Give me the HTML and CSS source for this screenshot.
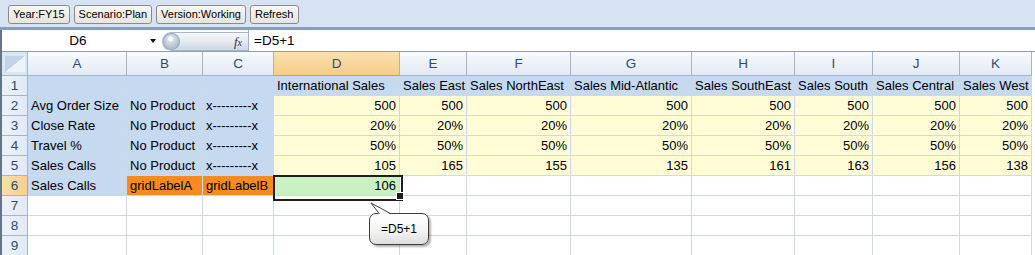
FILE: index.html
```html
<!DOCTYPE html>
<html>
<head>
<meta charset="utf-8">
<title>Sheet</title>
<link rel="stylesheet" href="styles.css">
</head>
<body>
<div class="toolbar">
  <button class="btn">Year:FY15</button>
  <button class="btn">Scenario:Plan</button>
  <button class="btn">Version:Working</button>
  <button class="btn">Refresh</button>
</div>
<div class="main">
  <div class="fbar">
    <div class="namebox"><span class="name">D6</span><span class="dd"></span></div>
    <div class="grip"><span class="knob"></span><span class="fx"><i>f</i><i class="fxx">x</i></span></div>
    <div class="formula">=D5+1</div>
  </div>
  <div class="sheetwrap">
    <div class="sheet">
      <div class="corner"><span class="tri"></span></div>
      <div class="h">A</div><div class="h">B</div><div class="h">C</div><div class="h hsel">D</div><div class="h">E</div><div class="h">F</div><div class="h">G</div><div class="h">H</div><div class="h">I</div><div class="h">J</div><div class="h">K</div>

      <div class="rh">1</div>
      <div class="c bl"></div><div class="c bl"></div><div class="c bl"></div>
      <div class="c bl">International Sales</div><div class="c bl">Sales East</div><div class="c bl">Sales NorthEast</div><div class="c bl">Sales Mid-Atlantic</div><div class="c bl">Sales SouthEast</div><div class="c bl">Sales South</div><div class="c bl">Sales Central</div><div class="c bl">Sales West</div>

      <div class="rh">2</div>
      <div class="c bl">Avg Order Size</div><div class="c bl">No Product</div><div class="c bl">x---------x</div>
      <div class="c yl r">500</div><div class="c yl r">500</div><div class="c yl r">500</div><div class="c yl r">500</div><div class="c yl r">500</div><div class="c yl r">500</div><div class="c yl r">500</div><div class="c yl r">500</div>

      <div class="rh">3</div>
      <div class="c bl">Close Rate</div><div class="c bl">No Product</div><div class="c bl">x---------x</div>
      <div class="c yl r">20%</div><div class="c yl r">20%</div><div class="c yl r">20%</div><div class="c yl r">20%</div><div class="c yl r">20%</div><div class="c yl r">20%</div><div class="c yl r">20%</div><div class="c yl r">20%</div>

      <div class="rh">4</div>
      <div class="c bl">Travel %</div><div class="c bl">No Product</div><div class="c bl">x---------x</div>
      <div class="c yl r">50%</div><div class="c yl r">50%</div><div class="c yl r">50%</div><div class="c yl r">50%</div><div class="c yl r">50%</div><div class="c yl r">50%</div><div class="c yl r">50%</div><div class="c yl r">50%</div>

      <div class="rh">5</div>
      <div class="c bl">Sales Calls</div><div class="c bl">No Product</div><div class="c bl">x---------x</div>
      <div class="c yl r">105</div><div class="c yl r">165</div><div class="c yl r">155</div><div class="c yl r">135</div><div class="c yl r">161</div><div class="c yl r">163</div><div class="c yl r">156</div><div class="c yl r">138</div>

      <div class="rh rhsel">6</div>
      <div class="c bl">Sales Calls</div><div class="c or">gridLabelA</div><div class="c or">gridLabelB</div>
      <div class="c gr r active">106</div><div class="c"></div><div class="c"></div><div class="c"></div><div class="c"></div><div class="c"></div><div class="c"></div><div class="c"></div>

      <div class="rh">7</div>
      <div class="c"></div><div class="c"></div><div class="c"></div><div class="c"></div><div class="c"></div><div class="c"></div><div class="c"></div><div class="c"></div><div class="c"></div><div class="c"></div><div class="c"></div>

      <div class="rh">8</div>
      <div class="c"></div><div class="c"></div><div class="c"></div><div class="c"></div><div class="c"></div><div class="c"></div><div class="c"></div><div class="c"></div><div class="c"></div><div class="c"></div><div class="c"></div>

      <div class="rh">9</div>
      <div class="c"></div><div class="c"></div><div class="c"></div><div class="c"></div><div class="c"></div><div class="c"></div><div class="c"></div><div class="c"></div><div class="c"></div><div class="c"></div><div class="c"></div>
    </div>
    <div class="tip">=D5+1</div>
    <svg class="tail" width="26" height="14" viewBox="0 0 26 14">
      <polygon points="3,1 11,12.6 23,12.6" fill="#ffffff"/>
      <line x1="3" y1="1" x2="11.5" y2="12" stroke="#3c3c3c" stroke-width="1"/>
      <line x1="3" y1="1" x2="22.5" y2="11.5" stroke="#3c3c3c" stroke-width="1"/>
    </svg>
  </div>
</div>
</body>
</html>
```

FILE: styles.css
```css
* { box-sizing: border-box; }
html, body { margin: 0; padding: 0; }
body {
  width: 1035px;
  height: 255px;
  overflow: hidden;
  background: #ffffff;
  font-family: "Liberation Sans", Arial, sans-serif;
}

/* toolbar */
.toolbar {
  height: 30px;
  background: #d5e3f3;
  border-bottom: 3px solid #8a9dbe;
  display: flex;
  align-items: flex-start;
  gap: 4px;
  padding: 5px 0 0 8px;
}
.btn {
  height: 19px;
  margin: 0;
  padding: 0 4px;
  font: 11px/17px "Liberation Sans", Arial, sans-serif;
  color: #000;
  background: linear-gradient(#f8f7f3, #e6e4de);
  border: 1px solid #8a8a8a;
  border-radius: 3px;
}

/* main area */
.main {
  border-left: 2px solid #66768a;
}
.fbar {
  height: 22px;
  display: flex;
  background: #fff;
  border-bottom: 1px solid #8e9db2;
}
.namebox {
  width: 158px;
  display: flex;
  align-items: center;
}
.name {
  width: 146px;
  padding-left: 6px;
  text-align: center;
  font-size: 13.5px;
  color: #000;
}
.dd {
  width: 0;
  height: 0;
  margin-left: 2px;
  border-left: 3.5px solid transparent;
  border-right: 3.5px solid transparent;
  border-top: 4px solid #111;
}
.grip {
  width: 86px;
  height: 19px;
  margin: 2px 0 0 2px;
  display: flex;
  align-items: center;
  justify-content: space-between;
  border: 1px solid #a9b6c8;
  border-right: none;
  border-radius: 10px 0 0 10px;
  background: linear-gradient(#f5f7fa, #e4eaf2 50%, #ccd7e5);
}
.knob {
  width: 17px;
  height: 17px;
  border-radius: 50%;
  background: radial-gradient(circle at 45% 35%, #ffffff 0 2px, #d7dee7 3px, #b3bfcd 9px);
  box-shadow: inset 0 0 0 1px #9fadbf;
}
.fx {
  padding-right: 6px;
  font-family: "Liberation Serif", "Times New Roman", serif;
  font-size: 13px;
  color: #333;
}
.fxx { font-size: 10px; }
.formula {
  flex: 1;
  border-left: 1px solid #a2b0c2;
  padding-left: 5px;
  font-size: 13.5px;
  line-height: 21px;
  color: #000;
}

/* sheet */
.sheetwrap { position: relative; }
.sheet {
  display: grid;
  grid-template-columns: 26px 99px 76px 71px 126px 67px 104px 121px 103px 78px 87px 72px;
  grid-template-rows: 24px repeat(9, 20px);
}
.corner {
  background: #dce6f3;
  border-right: 1px solid #9eb6ce;
  border-bottom: 1px solid #9eb6ce;
  padding: 4px 2px 3px 3px;
}
.tri {
  display: block;
  width: 100%;
  height: 100%;
  background: linear-gradient(to bottom right, #c3d3e8 50%, #eef3f9 50%);
}
.h {
  background: linear-gradient(#f7fafd, #e3eaf5);
  border-right: 1px solid #9eb6ce;
  border-bottom: 1px solid #9eb6ce;
  text-align: center;
  font-size: 13.5px;
  line-height: 23px;
  color: #2f4a6d;
}
.hsel {
  background: linear-gradient(#fbe0b0, #f6cd88);
  border-bottom-color: #e59a3c;
}
.rh {
  background: linear-gradient(90deg, #edf2f9, #e2e9f4);
  border-right: 1px solid #9eb6ce;
  border-bottom: 1px solid #9eb6ce;
  text-align: center;
  font-size: 13.5px;
  line-height: 19px;
  color: #2f4a6d;
}
.rhsel {
  background: linear-gradient(90deg, #fbdeaa, #f7cf8d);
  border-right-color: #e59a3c;
}
.c {
  border-right: 1px solid #d0d7e5;
  border-bottom: 1px solid #d0d7e5;
  padding: 0 3px;
  font-size: 13px;
  line-height: 20px;
  color: #000;
  white-space: nowrap;
  overflow: hidden;
}
.r { text-align: right; }
.bl { background: #c5d9f1; }
.yl { background: #fffcd6; }
.gr { background: #c9f1c1; }
.or { background: #f78b1f; }

.active {
  position: relative;
  overflow: visible;
  z-index: 2;
}
.active::after {
  content: "";
  position: absolute;
  left: -1px;
  top: -1px;
  width: 126px;
  height: 22px;
  border: 2px solid #1e1e1e;
}
.active::before {
  content: "";
  position: absolute;
  left: 122px;
  top: 16px;
  width: 6px;
  height: 6px;
  background: #1e1e1e;
  border: 1px solid #ffffff;
  z-index: 3;
}

/* comment tooltip */
.tip {
  position: absolute;
  left: 367px;
  top: 161px;
  width: 60px;
  height: 32px;
  border: 1px solid #3c3c3c;
  border-radius: 7px;
  background: linear-gradient(#ffffff, #f4f4f4 55%, #dedede);
  box-shadow: 2px 2px 2px rgba(0, 0, 0, 0.3);
  font-size: 12px;
  line-height: 30px;
  text-align: center;
  color: #000;
  z-index: 4;
}
.tail {
  position: absolute;
  left: 366px;
  top: 150px;
  z-index: 5;
}
```
